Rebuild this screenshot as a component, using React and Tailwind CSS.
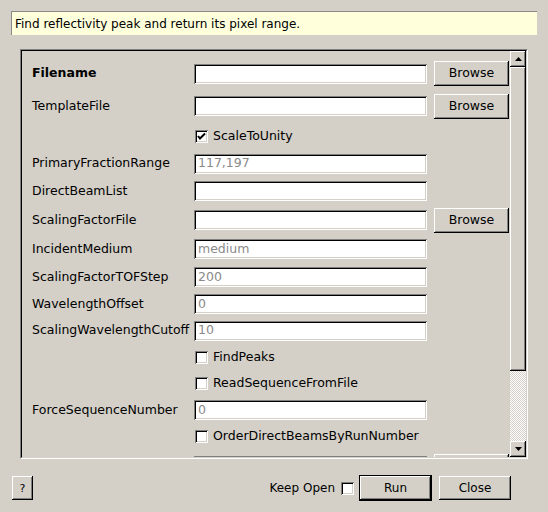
import React from "react";

const sunken =
  "shadow-[inset_1px_1px_0_#808080,inset_-1px_-1px_0_#ffffff,inset_2px_2px_0_#000000,inset_-2px_-2px_0_#d4d0c8]";
const raised =
  "shadow-[inset_-1px_-1px_0_#000000,inset_1px_1px_0_#ffffff,inset_-2px_-2px_0_#808080,inset_2px_2px_0_#d4d0c8]";

function Input({ value }) {
  return (
    <div className={`w-[233px] h-[20px] bg-white ${sunken} flex items-center pl-[4px] text-[#8a8a8a] leading-none text-[12.5px]`}>
      {value}
    </div>
  );
}

function Button({ children, className = "" }) {
  return (
    <div className={`bg-[#d4d0c8] ${raised} flex items-center justify-center text-black leading-none ${className}`}>
      {children}
    </div>
  );
}

function Check({ checked }) {
  return (
    <div className={`w-[13px] h-[13px] bg-white ${sunken} relative shrink-0`}>
      {checked && (
        <svg className="absolute left-0 top-0" width="13" height="13" viewBox="0 0 13 13">
          <path d="M3 6 L5 8.5 L10 3.5" stroke="#000" strokeWidth="2" fill="none" />
        </svg>
      )}
    </div>
  );
}

function Row({ h, label, bold, input, browse, check, last }) {
  return (
    <div className="flex items-center shrink-0" style={{ height: h }}>
      <div className={`w-[172px] pl-[10px] shrink-0 text-[12.5px] ${bold ? "font-bold" : ""}`}>{label}</div>
      {check !== undefined ? (
        <div className="flex items-center gap-[5px] ml-[1px] text-[12.5px]">
          <Check checked={check.checked} />
          <span>{check.text}</span>
        </div>
      ) : (
        <Input value={input} />
      )}
      {browse && (
        <Button className="w-[75px] h-[25px] ml-[7px] shrink-0 text-[12.5px]">{last ? "" : "Browse"}</Button>
      )}
    </div>
  );
}

export default function App() {
  const rows = [
    { h: 33, label: "Filename", bold: true, input: "", browse: true },
    { h: 32, label: "TemplateFile", input: "", browse: true },
    { h: 28, label: "", check: { checked: true, text: "ScaleToUnity" } },
    { h: 27, label: "PrimaryFractionRange", input: "117,197" },
    { h: 28, label: "DirectBeamList", input: "" },
    { h: 30, label: "ScalingFactorFile", input: "", browse: true },
    { h: 28, label: "IncidentMedium", input: "medium" },
    { h: 28, label: "ScalingFactorTOFStep", input: "200" },
    { h: 26, label: "WavelengthOffset", input: "0" },
    { h: 27, label: "ScalingWavelengthCutoff", input: "10" },
    { h: 26, label: "", check: { checked: false, text: "FindPeaks" } },
    { h: 27, label: "", check: { checked: false, text: "ReadSequenceFromFile" } },
    { h: 26, label: "ForceSequenceNumber", input: "0" },
    { h: 27, label: "", check: { checked: false, text: "OrderDirectBeamsByRunNumber" } },
    { h: 32, label: "", input: "", browse: true, last: true },
  ];

  return (
    <div className="w-[548px] h-[512px] bg-[#d4d0c8] font-['DejaVu_Sans',sans-serif] text-[12px] text-black flex flex-col overflow-hidden">
      <div className="mt-[11px] ml-[11px] w-[526px] h-[24px] bg-[#ffffdc] border-t border-l border-[#8a8a8a] flex items-center pl-[3px] leading-none">
        Find reflectivity peak and return its pixel range.
      </div>

      <div className="mt-[14px] ml-[20px] w-[508px] h-[410px] border-t border-l border-[#808080] border-b border-r border-b-white border-r-white">
        <div className="w-full h-full border-t border-l border-black border-b border-r border-b-[#d4d0c8] border-r-[#d4d0c8] flex">
          <div className="w-[489px] h-full overflow-hidden flex flex-col pt-[6px]">
            {rows.map((r, i) => (
              <Row key={i} {...r} />
            ))}
          </div>
          <div className="w-[16px] h-full flex flex-col">
            <div className={`h-[16px] bg-[#d4d0c8] ${raised} flex items-center justify-center shrink-0`}>
              <svg width="7" height="4" viewBox="0 0 7 4">
                <path d="M3.5 0 L7 4 L0 4 Z" fill="#000" />
              </svg>
            </div>
            <div className={`h-[304px] bg-[#d4d0c8] ${raised} shrink-0`} />
            <div className="flex-1 bg-[repeating-conic-gradient(#d4d0c8_0_25%,#ffffff_0_50%)] bg-[length:2px_2px]" />
            <div className={`h-[16px] bg-[#d4d0c8] ${raised} flex items-center justify-center shrink-0`}>
              <svg width="7" height="4" viewBox="0 0 7 4">
                <path d="M0 0 L7 0 L3.5 4 Z" fill="#000" />
              </svg>
            </div>
          </div>
        </div>
      </div>

      <div className="mt-[16px] h-[26px] flex items-center ml-[12px] mr-[37px]">
        <Button className="w-[21px] h-[24px] text-[11px]">?</Button>
        <div className="flex-1" />
        <span className="mr-[6px]">Keep Open</span>
        <Check checked={false} />
        <div className="ml-[5px] w-[73px] h-[26px] border border-black">
          <Button className="w-full h-full">Run</Button>
        </div>
        <Button className="ml-[7px] w-[72px] h-[24px]">Close</Button>
      </div>
    </div>
  );
}
